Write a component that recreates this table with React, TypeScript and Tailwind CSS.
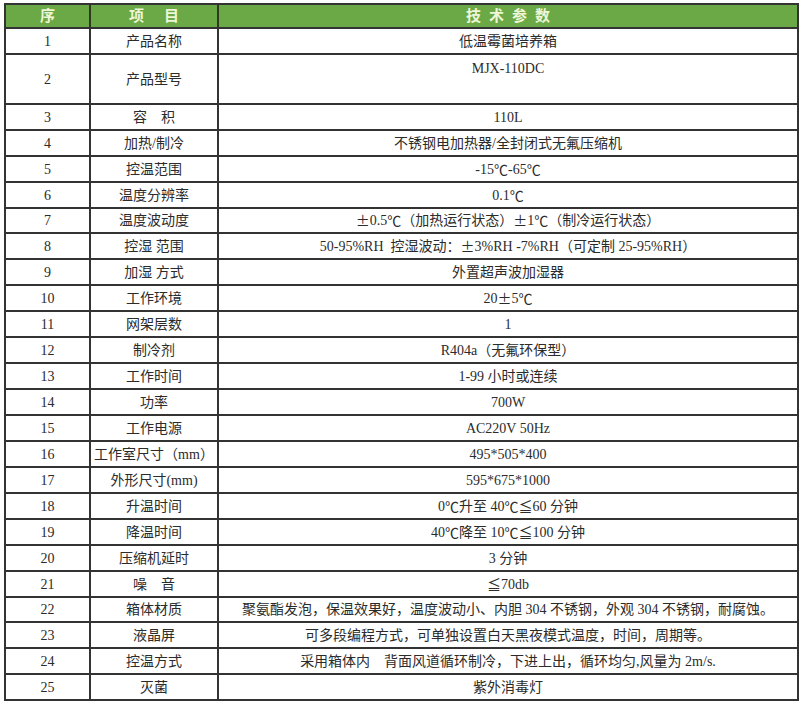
const rows: { name: string; value: string; h?: string; top?: boolean }[] = [
  { name: '产品名称', value: '低温霉菌培养箱' },
  { name: '产品型号', value: 'MJX-110DC', h: 'h-[50px]', top: true },
  { name: '容　积', value: '110L' },
  { name: '加热/制冷', value: '不锈钢电加热器/全封闭式无氟压缩机' },
  { name: '控温范围', value: '-15℃-65℃' },
  { name: '温度分辨率', value: '0.1℃' },
  { name: '温度波动度', value: '±0.5℃（加热运行状态）±1℃（制冷运行状态）', h: 'h-[25px]' },
  { name: '控湿 范围', value: '50-95%RH  控湿波动：±3%RH -7%RH（可定制 25-95%RH）' },
  { name: '加湿 方式', value: '外置超声波加湿器' },
  { name: '工作环境', value: '20±5℃' },
  { name: '网架层数', value: '1' },
  { name: '制冷剂', value: 'R404a（无氟环保型）' },
  { name: '工作时间', value: '1-99 小时或连续' },
  { name: '功率', value: '700W' },
  { name: '工作电源', value: 'AC220V 50Hz' },
  { name: '工作室尺寸（mm）', value: '495*505*400' },
  { name: '外形尺寸(mm)', value: '595*675*1000' },
  { name: '升温时间', value: '0℃升至 40℃≦60 分钟' },
  { name: '降温时间', value: '40℃降至 10℃≦100 分钟' },
  { name: '压缩机延时', value: '3 分钟' },
  { name: '噪　音', value: '≦70db' },
  { name: '箱体材质', value: '聚氨酯发泡，保温效果好，温度波动小、内胆 304 不锈钢，外观 304 不锈钢，耐腐蚀。', h: 'h-[25px]' },
  { name: '液晶屏', value: '可多段编程方式，可单独设置白天黑夜模式温度，时间，周期等。' },
  { name: '控温方式', value: '采用箱体内　背面风道循环制冷，下进上出，循环均匀,风量为 2m/s.' },
  { name: '灭菌', value: '紫外消毒灯' },
];

const font = {
  fontFamily: '"Liberation Serif", "Noto Sans CJK SC", serif',
};

// ±, ℃ and ≦ are full-width in the original, so set them in the CJK face
function Value({ text }: { text: string }) {
  const parts = text.split(/([±℃≦])/);
  return (
    <>
      {parts.map((p, i) =>
        /^[±℃≦]$/.test(p) ? (
          <span key={i} className="inline-block w-[14px] text-center font-['Noto_Sans_CJK_SC']">
            {p}
          </span>
        ) : (
          <span key={i}>{p}</span>
        ),
      )}
    </>
  );
}

export default function App() {
  return (
    <div className="h-[701px] w-[800px] overflow-hidden bg-white pt-[3px] pl-[4px]" style={font}>
      <div className="w-[795px] border-2 border-[#333] text-[14px] text-[#2b2b2b]">
        <div className="flex h-[22px] bg-[#6aa945] text-[15px] font-bold text-[#eef6d6]">
          <div className="flex w-[83px] items-center justify-center">序</div>
          <div className="flex w-[128px] items-center justify-center gap-[20px] border-l-2 border-[#2c3a22]">
            <span>项</span>
            <span>目</span>
          </div>
          <div className="flex flex-1 items-center justify-center border-l-2 border-[#2c3a22] tracking-[8px] pl-[8px]">
            技术参数
          </div>
        </div>
        {rows.map((r, i) => (
          <div
            key={i}
            className={`flex box-border border-t-2 border-[#333] ${r.h ?? 'h-[26px]'}`}
          >
            <div className="flex w-[83px] items-center justify-center">{i + 1}</div>
            <div className="flex w-[128px] items-center justify-center whitespace-pre border-l-2 border-[#333]">
              {r.name}
            </div>
            <div
              className={`flex flex-1 justify-center whitespace-pre border-l-2 border-[#333] ${
                r.top ? 'items-start pt-[3px]' : 'items-center'
              }`}
            >
              <Value text={r.value} />
            </div>
          </div>
        ))}
      </div>
    </div>
  );
}
